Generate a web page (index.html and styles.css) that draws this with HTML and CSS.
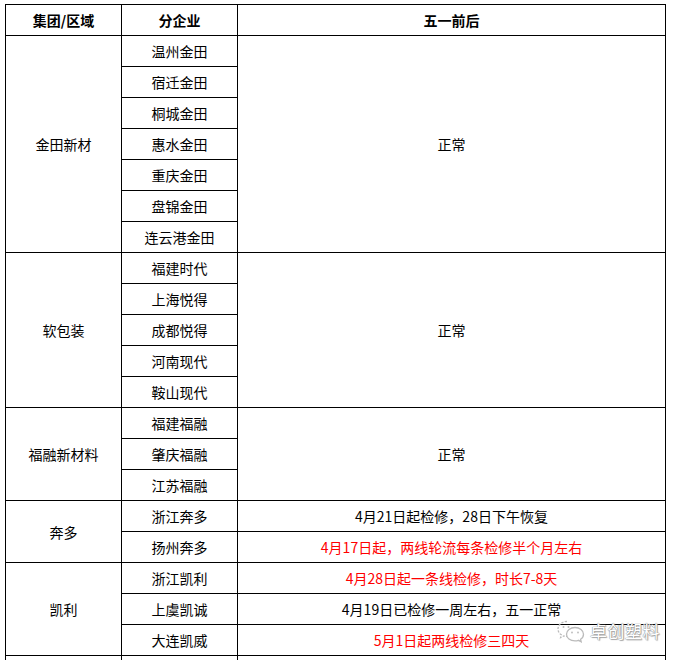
FILE: index.html
```html
<!DOCTYPE html>
<html lang="zh">
<head>
<meta charset="utf-8">
<link rel="stylesheet" href="styles.css">
</head>
<body>
<div class="page">
<table class="sheet">
  <colgroup><col class="c1"><col class="c2"><col class="c3"></colgroup>
  <thead>
    <tr><th>集团/区域</th><th>分企业</th><th>五一前后</th></tr>
  </thead>
  <tbody>
    <tr><td rowspan="7">金田新材</td><td>温州金田</td><td rowspan="7">正常</td></tr>
    <tr><td>宿迁金田</td></tr>
    <tr><td>桐城金田</td></tr>
    <tr><td>惠水金田</td></tr>
    <tr><td>重庆金田</td></tr>
    <tr><td>盘锦金田</td></tr>
    <tr><td>连云港金田</td></tr>
    <tr><td rowspan="5">软包装</td><td>福建时代</td><td rowspan="5">正常</td></tr>
    <tr><td>上海悦得</td></tr>
    <tr><td>成都悦得</td></tr>
    <tr><td>河南现代</td></tr>
    <tr><td>鞍山现代</td></tr>
    <tr><td rowspan="3">福融新材料</td><td>福建福融</td><td rowspan="3">正常</td></tr>
    <tr><td>肇庆福融</td></tr>
    <tr><td>江苏福融</td></tr>
    <tr><td rowspan="2">奔多</td><td>浙江奔多</td><td>4月21日起检修，28日下午恢复</td></tr>
    <tr><td>扬州奔多</td><td class="red">4月17日起，两线轮流每条检修半个月左右</td></tr>
    <tr><td rowspan="3">凯利</td><td>浙江凯利</td><td class="red">4月28日起一条线检修，时长7-8天</td></tr>
    <tr><td>上虞凯诚</td><td>4月19日已检修一周左右，五一正常</td></tr>
    <tr><td>大连凯威</td><td class="red">5月1日起两线检修三四天</td></tr>
    <tr><td>&nbsp;</td><td>&nbsp;</td><td>&nbsp;</td></tr>
  </tbody>
</table>
<div class="watermark">
  <svg class="wm-icon" width="30" height="24" viewBox="0 0 30 24">
    <path d="M11 2.5 C5.5 2.5 2 6 2 10 C2 12.5 3.3 14.5 5.3 15.8 L4.6 18.6 L7.8 16.9 C8.8 17.2 9.8 17.4 11 17.4" fill="none" stroke="#bbb" stroke-width="1.3" stroke-dasharray="2.2 1.4"/>
    <path d="M19 8.5 C23.8 8.5 27.5 11.5 27.5 15.2 C27.5 17.3 26.4 19.1 24.6 20.3 L25.2 22.7 L22.4 21.3 C21.3 21.7 20.2 21.9 19 21.9 C14.2 21.9 10.5 18.9 10.5 15.2 C10.5 11.5 14.2 8.5 19 8.5 Z" fill="#fff" stroke="#bbb" stroke-width="1.3"/>
    <circle cx="7.5" cy="8" r="1" fill="#bbb"/>
    <circle cx="12.5" cy="8" r="1" fill="#bbb"/>
    <circle cx="16" cy="13.5" r="0.9" fill="#bbb"/>
    <circle cx="22" cy="13.5" r="0.9" fill="#bbb"/>
  </svg>
  <span class="wm-text">卓创塑料</span>
</div>
</div>
</body>
</html>
```
FILE: styles.css
```css
html, body {
  margin: 0;
  padding: 0;
  background: #fff;
}
.page {
  position: relative;
  width: 674px;
  height: 660px;
  overflow: hidden;
  padding: 4px 0 0 5px;
  box-sizing: border-box;
}
.sheet {
  border-collapse: collapse;
  table-layout: fixed;
  width: 660px;
  font-family: "Noto Sans CJK SC", "Microsoft YaHei", sans-serif;
  font-size: 14px;
  color: #000;
}
.c1 { width: 116px; }
.c2 { width: 116px; }
.c3 { width: 428px; }
.sheet th, .sheet td {
  border: 1px solid #000;
  height: 30px;
  padding: 0;
  text-align: center;
  vertical-align: middle;
  line-height: 18px;
  white-space: nowrap;
}
.sheet th {
  font-weight: bold;
}
.sheet td.red {
  color: #ff0000;
}
.watermark {
  position: absolute;
  left: 556px;
  top: 618px;
  display: flex;
  align-items: center;
  gap: 4px;
}
.wm-text {
  font-family: "Noto Sans CJK SC", sans-serif;
  font-size: 17px;
  color: #fff;
  letter-spacing: 0.5px;
  text-shadow: 0 0 1px #888, 0 0 1px #888, 1px 1px 1px #aaa;
}
```
